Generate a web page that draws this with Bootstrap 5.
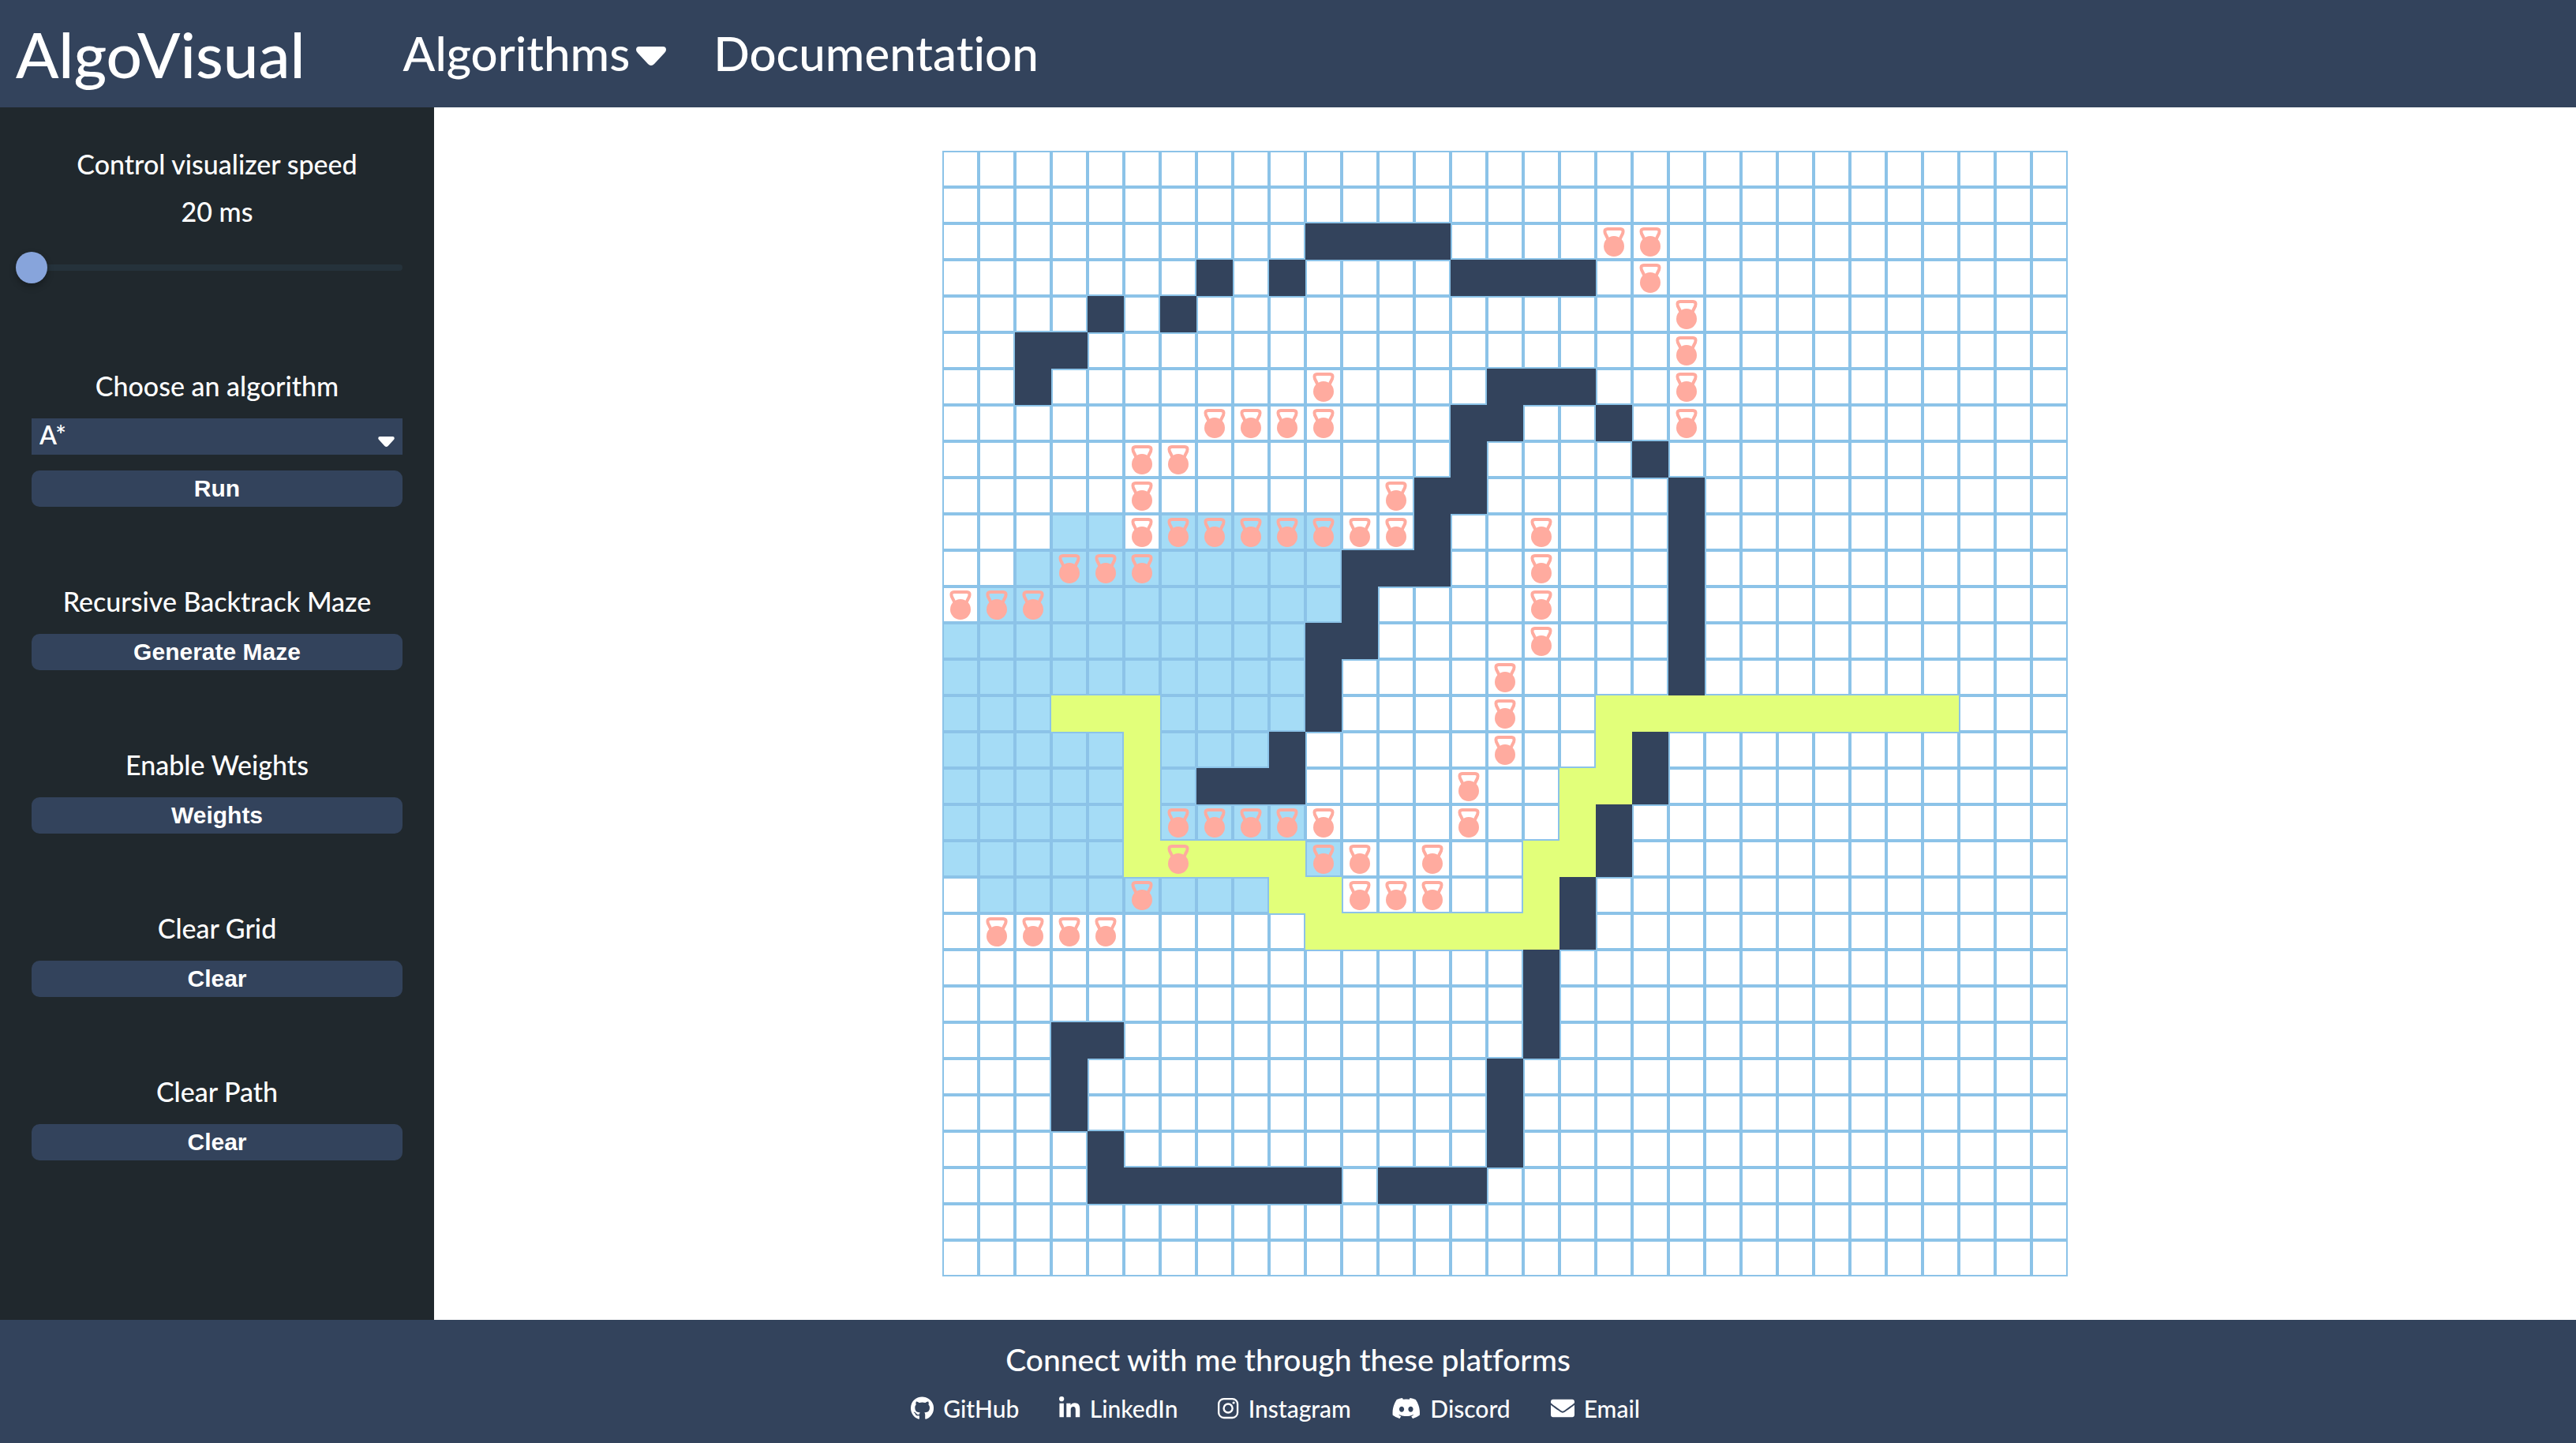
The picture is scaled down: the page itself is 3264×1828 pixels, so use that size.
<!DOCTYPE html>
<html lang="en">
<head>
<meta charset="utf-8">
<meta name="viewport" content="width=device-width, initial-scale=1">
<title>AlgoVisual</title>
<link rel="stylesheet" href="https://cdn.jsdelivr.net/npm/bootstrap@5.3.0/dist/css/bootstrap.min.css">
<style>
  :root { --navy: #33435c; --ink: #20282d; --line: #8cc3e8; --seen: #a5dcf6; --route: #e2ff7a; --bell: #ffab9f; }
  body { font-family: Lato, "Liberation Sans", sans-serif; font-weight: 500; font-variant-ligatures: none; color: #fff; background: #fff; }
  a { color: #fff; text-decoration: none; }
  .bg-navy { background: var(--navy); }
  .top-bar { padding: 20px; gap: 124px; }
  .brand-name { font-size: 80px; line-height: 96px; }
  .top-links { gap: 60px; font-size: 60px; line-height: 72px; margin-bottom: 2px; }
  .menu-toggle { font-size: 60px; line-height: 72px; font-weight: 500; color: #fff; gap: 8px; }
  .menu-toggle svg { width: 38px; height: 24px; margin-top: 8px; }
  .side-panel { width: 550px; padding: 42px 40px; background: var(--ink); gap: 90px; }
  .side-label { font-size: 34px; line-height: 60px; margin-bottom: 11px; }
  .speed-range { -webkit-appearance: none; appearance: none; width: calc(100% + 20px); height: 40px; margin: 21px 0 10px -20px; background: transparent; }
  .speed-range::-webkit-slider-runnable-track { height: 8px; border-radius: 4px; background: linear-gradient(90deg, transparent 20px, #25323b 20px); }
  .speed-range::-webkit-slider-thumb { -webkit-appearance: none; width: 40px; height: 40px; margin-top: -16px; border-radius: 50%; background: #87a4db; box-shadow: 0 4px 8px rgba(0,0,0,.3); }
  .select-wrap { position: relative; margin-bottom: 20px; }
  .algo-select { -webkit-appearance: none; appearance: none; display: block; width: 100%; height: 46px; border: 0; border-radius: 0; padding: 0 10px 4px; font-size: 32px; line-height: 42px; font-weight: 600; color: #fff; background: var(--navy); }
  .select-wrap svg { position: absolute; right: 10px; top: 23px; width: 21px; height: 13px; pointer-events: none; }
  .side-btn { display: block; width: 100%; height: 46px; border: 0; border-radius: 10px; padding: 0; background: var(--navy); color: #fff; font: bold 30px/46px "Liberation Sans", Arial, sans-serif; }
  .board-area { padding: 55px; }
  .board { display: grid; grid-template-columns: repeat(31, 46px); }
  .cell { height: 46px; border: 2px solid var(--line); }
  .cell svg { display: block; width: 42px; height: 42px; }
  .seen { background: var(--seen); }
  .wall { background: var(--navy); border-color: var(--navy); }
  .route { background: var(--route); border-color: var(--route); }
  .foot { padding: 20px 0 26px; }
  .foot-title { font-size: 39px; line-height: 60px; }
  .foot-links { gap: 51px; font-size: 30px; line-height: 36px; margin-top: 14px; padding-right: 32px; }
  .foot-links a { gap: 12px; }
  .foot-links svg { height: 30px; fill: currentColor; }
</style>
<script src="https://cdn.jsdelivr.net/npm/bootstrap@5.3.0/dist/js/bootstrap.bundle.min.js"></script>
</head>
<body class="d-flex flex-column min-vh-100">
<header class="top-bar bg-navy d-flex align-items-center">
  <a class="brand-name" href="#">AlgoVisual</a>
  <nav class="top-links d-flex align-items-center">
    <button class="menu-toggle btn border-0 p-0 d-flex align-items-center" type="button">Algorithms<svg viewBox="0 0 38 24" aria-hidden="true"><path d="M4 0H34Q38 0 38 4Q38 6 36 8L23 22Q19 26 15 22L2 8Q0 6 0 4Q0 0 4 0Z" fill="#fff"/></svg></button>
    <a href="#">Documentation</a>
  </nav>
</header>
<div class="d-flex flex-grow-1">
  <aside class="side-panel d-flex flex-column flex-shrink-0 text-center">
    <section>
      <label class="side-label d-block mb-0" for="speed">Control visualizer speed</label>
      <output class="side-label d-block" for="speed">20 ms</output>
      <input class="speed-range d-block" id="speed" type="range" min="20" max="1000" value="20">
    </section>
    <section>
      <label class="side-label d-block" for="algo">Choose an algorithm</label>
      <div class="select-wrap">
        <select class="algo-select" id="algo"><option>A*</option><option>Dijkstra</option></select>
        <svg viewBox="0 0 38 24" aria-hidden="true"><path d="M4 0H34Q38 0 38 4Q38 6 36 8L23 22Q19 26 15 22L2 8Q0 6 0 4Q0 0 4 0Z" fill="#fff"/></svg>
      </div>
      <button class="side-btn" type="button">Run</button>
    </section>
    <section>
      <div class="side-label">Recursive Backtrack Maze</div>
      <button class="side-btn" type="button">Generate Maze</button>
    </section>
    <section>
      <div class="side-label">Enable Weights</div>
      <button class="side-btn" type="button">Weights</button>
    </section>
    <section>
      <div class="side-label">Clear Grid</div>
      <button class="side-btn" type="button">Clear</button>
    </section>
    <section>
      <div class="side-label">Clear Path</div>
      <button class="side-btn" type="button">Clear</button>
    </section>
  </aside>
  <main class="board-area flex-grow-1 d-flex justify-content-center align-items-start">
    <div class="board" id="board"></div>
  </main>
</div>
<footer class="foot bg-navy text-center">
  <div class="foot-title">Connect with me through these platforms</div>
  <div class="foot-links d-flex justify-content-center">
    <a class="d-flex align-items-center" href="#"><svg viewBox="0 0 496 512" aria-hidden="true"><path d="M165.900 397.400c0 2-2.300 3.600-5.200 3.600-3.300.3-5.600-1.300-5.600-3.600 0-2 2.300-3.600 5.200-3.600 3-.3 5.600 1.300 5.600 3.600zm-31.100-4.500c-.7 2 1.300 4.300 4.300 4.900 2.600 1 5.600 0 6.200-2s-1.300-4.300-4.300-5.200c-2.600-.7-5.500.3-6.200 2.300zm44.200-1.700c-2.900.7-4.900 2.600-4.600 4.900.3 2 2.900 3.300 5.900 2.600 2.900-.7 4.900-2.600 4.600-4.600-.3-1.900-3-3.200-5.900-2.900zM244.800 8C106.100 8 0 113.300 0 252c0 110.900 69.800 205.800 169.500 239.200 12.800 2.300 17.300-5.600 17.300-12.100 0-6.200-.3-40.400-.3-61.400 0 0-70 15-84.700-29.800 0 0-11.400-29.100-27.800-36.600 0 0-22.900-15.700 1.600-15.400 0 0 24.900 2 38.600 25.800 21.900 38.600 58.600 27.500 72.900 20.900 2.300-16 8.800-27.100 16-33.700-55.900-6.200-112.300-14.300-112.300-110.500 0-27.500 7.600-41.300 23.600-58.900-2.600-6.500-11.100-33.300 2.600-67.900 20.900-6.500 69 27 69 27 20-5.600 41.500-8.500 62.800-8.500s42.800 2.900 62.800 8.500c0 0 48.100-33.600 69-27 13.700 34.700 5.200 61.400 2.600 67.900 16 17.700 25.800 31.500 25.800 58.900 0 96.500-58.900 104.200-114.800 110.500 9.200 7.900 17 22.900 17 46.400 0 33.700-.3 75.400-.3 83.600 0 6.500 4.600 14.400 17.300 12.100C428.200 457.800 496 362.900 496 252 496 113.300 383.500 8 244.800 8z"/></svg>GitHub</a>
    <a class="d-flex align-items-center" href="#"><svg viewBox="0 0 448 512" aria-hidden="true"><path d="M100.280 448H7.400V148.900h92.880zM53.790 108.100C24.090 108.100 0 83.500 0 53.800a53.790 53.790 0 0 1 107.580 0c0 29.700-24.100 54.300-53.790 54.300zM447.900 448h-92.680V302.400c0-34.700-.7-79.200-48.290-79.200-48.290 0-55.690 37.700-55.690 76.700V448h-92.780V148.900h89.080v40.800h1.300c12.400-23.500 42.690-48.300 87.880-48.300 94 0 111.280 61.900 111.280 142.300V448z"/></svg>LinkedIn</a>
    <a class="d-flex align-items-center" href="#"><svg viewBox="0 0 448 512" aria-hidden="true"><rect x="20" y="52" width="408" height="408" rx="112" fill="none" stroke="currentColor" stroke-width="40"/><circle cx="224" cy="256" r="94" fill="none" stroke="currentColor" stroke-width="41"/><circle cx="343" cy="137" r="27"/></svg>Instagram</a>
    <a class="d-flex align-items-center" href="#"><svg viewBox="0 0 640 512" aria-hidden="true"><path d="M524.531,69.836a1.500,1.500,0,0,0-.764-.7A485.065,485.065,0,0,0,404.081,32.030a1.816,1.816,0,0,0-1.923.91,337.461,337.461,0,0,0-14.900,30.600,447.848,447.848,0,0,0-134.426,0,309.541,309.541,0,0,0-15.135-30.600,1.890,1.890,0,0,0-1.924-.91A483.689,483.689,0,0,0,116.085,69.137a1.712,1.712,0,0,0-.788.676C39.068,183.651,18.186,294.690,28.430,404.354a2.016,2.016,0,0,0,.765,1.375A487.666,487.666,0,0,0,176.020,479.918a1.900,1.900,0,0,0,2.063-.676A348.200,348.200,0,0,0,208.120,430.400a1.860,1.860,0,0,0-1.019-2.588,321.173,321.173,0,0,1-45.868-21.853,1.885,1.885,0,0,1-.185-3.126c3.082-2.309,6.166-4.711,9.109-7.137a1.819,1.819,0,0,1,1.900-.256c96.229,43.917,200.410,43.917,295.500,0a1.812,1.812,0,0,1,1.924.233c2.944,2.426,6.027,4.851,9.132,7.160a1.884,1.884,0,0,1-.162,3.126,301.407,301.407,0,0,1-45.890,21.830,1.875,1.875,0,0,0-1,2.611,391.055,391.055,0,0,0,30.014,48.815,1.864,1.864,0,0,0,2.063.7A486.048,486.048,0,0,0,610.700,405.729a1.882,1.882,0,0,0,.765-1.352C623.729,277.594,590.933,167.465,524.531,69.836ZM222.491,337.580c-28.972,0-52.844-26.587-52.844-59.239S193.056,219.100,222.491,219.100c29.665,0,53.306,26.820,52.843,59.239C275.334,310.993,251.924,337.580,222.491,337.580Zm195.380,0c-28.971,0-52.843-26.587-52.843-59.239S388.437,219.100,417.871,219.100c29.667,0,53.307,26.820,52.844,59.239C470.715,310.993,447.538,337.580,417.871,337.580Z"/></svg>Discord</a>
    <a class="d-flex align-items-center" href="#"><svg viewBox="0 0 512 512" aria-hidden="true"><path d="M502.300 190.800c3.900-3.100 9.700-.2 9.700 4.700V400c0 26.500-21.500 48-48 48H48c-26.500 0-48-21.500-48-48V195.600c0-5 5.700-7.800 9.700-4.700 22.400 17.400 52.100 39.500 154.100 113.600 21.100 15.400 56.700 47.800 92.200 47.600 35.700.3 72-32.800 92.300-47.600 102-74.100 131.600-96.300 154-113.700zM256 320c23.200.4 56.600-29.200 73.400-41.400 132.700-96.300 142.800-104.700 173.400-128.700 5.800-4.500 9.200-11.500 9.200-18.900v-19c0-26.500-21.500-48-48-48H48c-26.500 0-48 21.500-48 48v19c0 7.400 3.400 14.300 9.200 18.900 30.600 23.900 40.700 32.400 173.400 128.700 16.800 12.200 50.200 41.800 73.400 41.400z"/></svg>Email</a>
  </div>
</footer>
<script>
  // . empty  # wall  o visited  p path  w weight  v visited weight  q weight on the path
  const rows = [
    '',
    '',
    '..........####....ww',
    '.......#.#....####.w',
    '....#.#.............w',
    '..##................w',
    '..#.......w....###..w',
    '.......wwww...##..#.w',
    '.....ww.......#....#',
    '.....w......w##.....#',
    '...oowvvvvvww#..w...#',
    '..ovvvooooo###..w...#',
    'wvvoooooooo#....w...#',
    'oooooooooo##....w...#',
    'oooooooooo#....w....#',
    'ooopppoooo#....w..pppppppppp',
    'ooooopooo#.....w..p#',
    'ooooopo###....w..pp#',
    'ooooopvvvvw...w..p#',
    'ooooopqpppvw.w..pp#',
    '.oooovoooppwww..p#',
    '.wwww.....ppppppp#',
    '................#',
    '................#',
    '...##...........#',
    '...#...........#',
    '...#...........#',
    '....#..........#',
    '....#######.###',
    '',
    ''
  ];
  const kinds = { '#': 'wall', o: 'seen', v: 'seen', p: 'route', q: 'route' };
  const bell = '<svg viewBox="0 0 42 42"><path d="M14 19L10 11Q8 5 13 5H29Q34 5 32 11L28 19" fill="none" stroke="#ffab9f" stroke-width="4"/><circle cx="21" cy="27" r="13" fill="#ffab9f"/></svg>';
  document.getElementById('board').innerHTML = rows.map(row =>
    [...row.padEnd(31, '.')].map(c =>
      '<div class="cell ' + (kinds[c] || '') + '">' + ('wvq'.includes(c) ? bell : '') + '</div>'
    ).join('')
  ).join('');
</script>
</body>
</html>
